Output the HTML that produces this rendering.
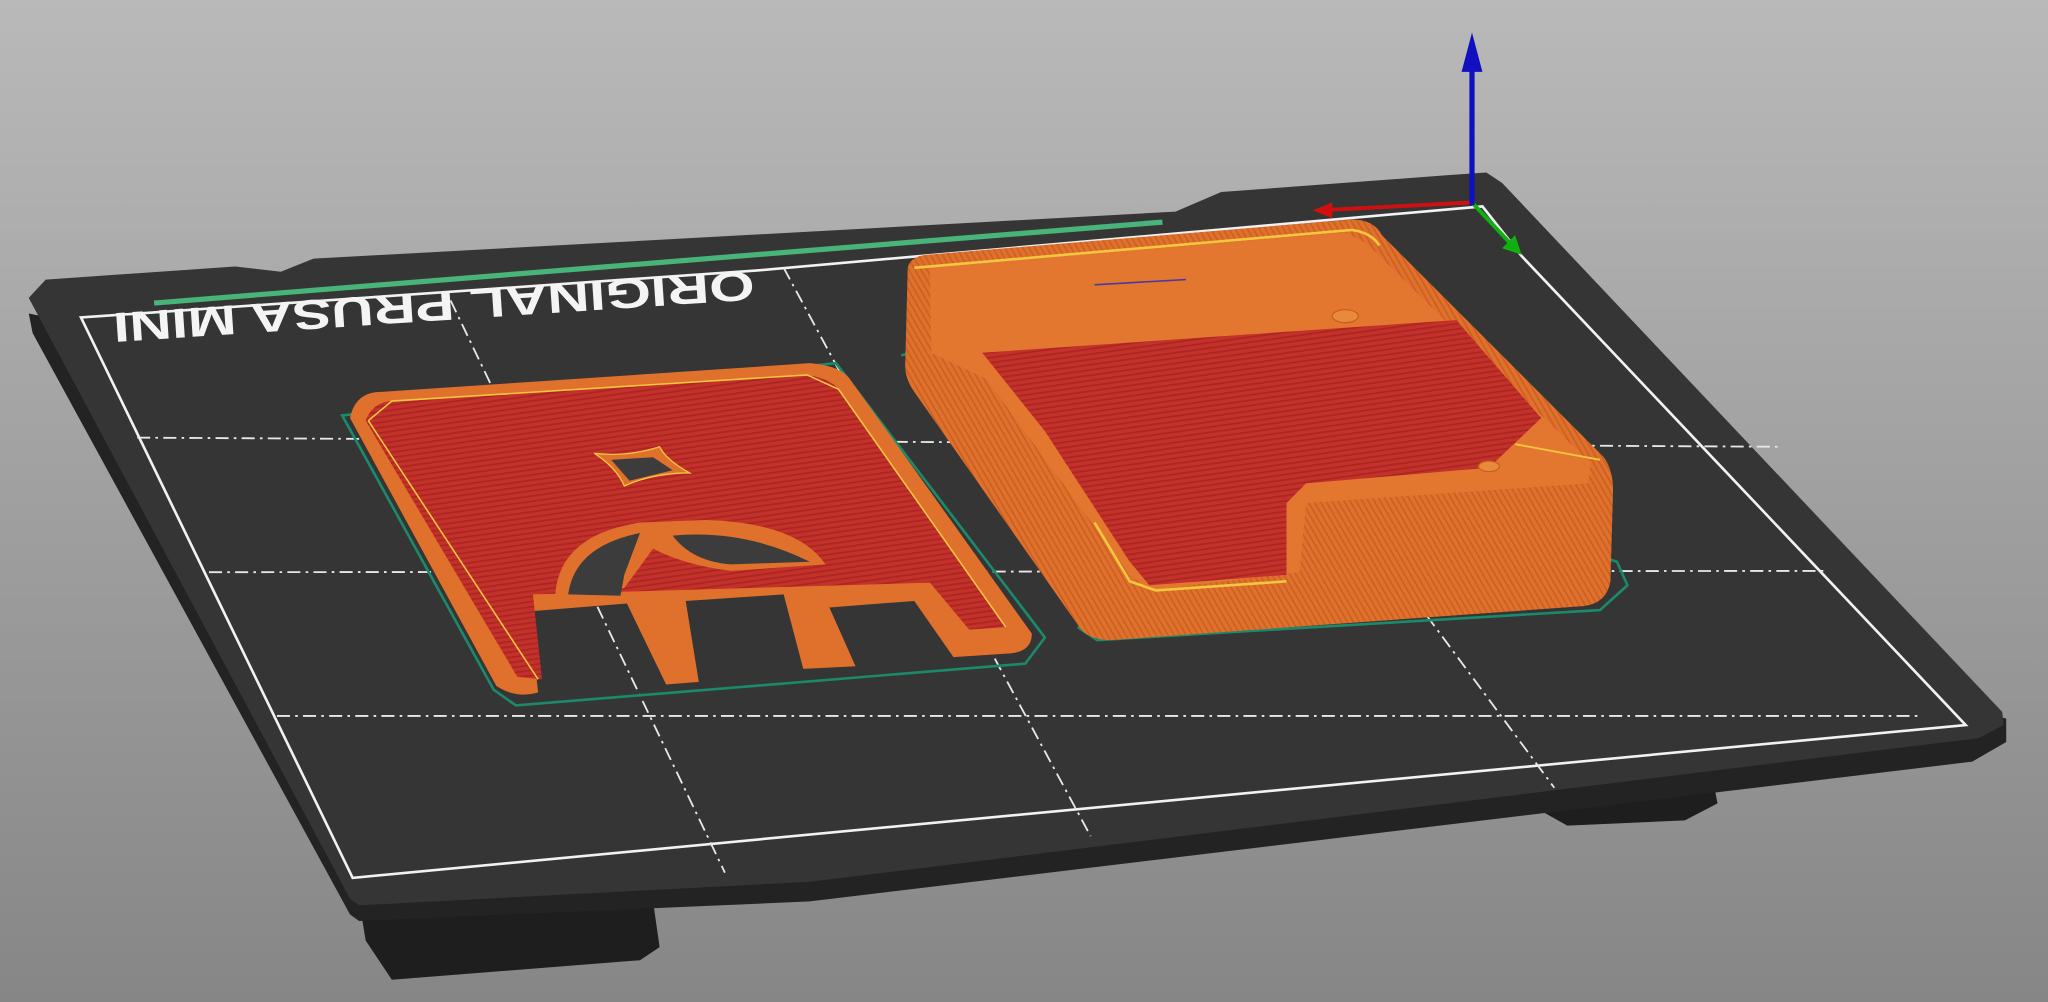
<!DOCTYPE html>
<html><head><meta charset="utf-8"><style>
html,body{margin:0;padding:0;width:2048px;height:1002px;overflow:hidden;background:#a0a0a0}
svg{display:block}
</style></head><body>
<svg width="2048" height="1002" viewBox="0 0 1568 767" preserveAspectRatio="none" xmlns="http://www.w3.org/2000/svg">
<defs>
<linearGradient id="bg" x1="0" y1="0" x2="0" y2="1">
<stop offset="0" stop-color="#b9b9b9"/><stop offset="1" stop-color="#868686"/>
</linearGradient>
<pattern id="rt" width="4" height="4" patternUnits="userSpaceOnUse" patternTransform="rotate(-8)">
<rect width="4" height="4" fill="#c4302a"/><rect width="4" height="1.3" fill="#a92622"/>
</pattern>
<pattern id="ot" width="4" height="4" patternUnits="userSpaceOnUse" patternTransform="rotate(60)">
<rect width="4" height="4" fill="#e0712c"/><rect width="4" height="1.2" fill="#c95f22"/>
</pattern>
</defs>
<rect width="1568" height="767" fill="url(#bg)"/>
<polygon points="275,690 500,690 505,725 490,735 300,750 280,720" fill="#1e1e1e"/>
<polygon points="1170,600 1310,590 1315,615 1290,628 1200,632 1175,618" fill="#1e1e1e"/>
<polygon points="22,240 25,255 268,700 275,705 620,690 1510,583 1536,568 1536,550" fill="#232323"/>
<polygon points="22,228 35,214 180,204 215,208 240,198 900,162 935,147 1110,134 1138,132 1150,140 1533,545 1534,555 1515,565 620,675 275,693 268,688" fill="#353535"/>
<polygon points="62,243 580,207 1135,158 1165,196 1505,555 270,672" fill="none" stroke="#f2f2f2" stroke-width="2"/>
<g stroke="#e8e8e8" stroke-width="1.4" stroke-dasharray="10,4,2,4" fill="none">
<line x1="345" y1="230" x2="555" y2="668"/>
<line x1="600" y1="205" x2="835" y2="640"/>
<line x1="878" y1="182" x2="1190" y2="603"/>
<line x1="105" y1="335" x2="1365" y2="342"/>
<line x1="160" y1="438" x2="1398" y2="437"/>
<line x1="212" y1="548" x2="1470" y2="548"/>
</g>
<line x1="118" y1="232" x2="890" y2="170" stroke="#48b47a" stroke-width="4"/>
<text x="0" y="0" transform="translate(332,232) rotate(176.2)" text-anchor="middle" dominant-baseline="middle" font-family="Liberation Sans, sans-serif" font-weight="bold" font-size="32" textLength="492" lengthAdjust="spacingAndGlyphs" fill="#f4f4f4">ORIGINAL PRUSA MINI</text>
<path d="M262,318 L640,278 L800,488 L785,508 L395,540 L378,528 Z" fill="none" stroke="#1a8a6a" stroke-width="2"/>
<path d="M690,272 L705,268 L1238,430 L1246,448 L1225,467 L840,490 L825,480" fill="none" stroke="#1a8a6a" stroke-width="2"/>
<path d="M268,320 Q272,300 292,300 L620,278 Q645,280 652,292 L790,485 Q790,498 775,500 L730,503 L700,460 L635,465 L655,510 L615,512 L600,455 L525,460 L535,522 L510,524 L480,462 L405,468 L412,530 Q395,535 380,525 Z" fill="#e0712c"/>
<path d="M280,322 Q285,308 300,307 L618,287 Q636,290 642,298 L770,480 L742,482 L712,446 L408,455 L415,520 L396,518 Z" fill="url(#rt)"/>
<path d="M282,322 L300,307 L618,287 L642,298 L770,480 M412,520 L282,322" fill="none" stroke="#f3c640" stroke-width="1.2"/>
<path d="M455,347 Q480,350 505,342 Q510,352 528,362 Q500,362 478,372 Q472,358 455,347 Z" fill="#e0712c" stroke="#f3c640" stroke-width="1"/>
<path d="M468,352 L500,350 L515,360 L482,368 Z" fill="#3c3c3c"/>
<path d="M425,460 Q425,410 490,400 L540,398 Q610,400 632,432 L560,437 Q525,433 500,420 L478,450 L440,462 Z" fill="#e0712c"/>
<path d="M435,455 Q440,418 490,408 L478,440 L475,456 Z" fill="#3c3c3c"/>
<path d="M515,410 Q570,405 620,430 L560,432 Q530,430 515,410 Z" fill="#3c3c3c"/>
<path d="M695,205 Q697,196 710,195 L1035,168 Q1052,168 1058,180 L1228,350 Q1235,360 1235,375 L1233,445 Q1230,462 1212,464 L850,490 Q832,490 825,478 L700,300 Q693,290 693,280 Z" fill="url(#ot)"/>
<path d="M712,205 L1030,178 L1046,186 L1218,355 L1216,370 L1000,385 L995,438 L880,452 L865,440 L755,290 L713,270 Z" fill="#e4772f"/>
<path d="M752,270 L1115,245 L1180,320 L1140,358 L1000,370 L985,385 L985,440 L880,448 L865,430 L800,330 Z" fill="url(#rt)"/>
<path d="M700,205 L1035,176 Q1050,178 1056,188" fill="none" stroke="#f3c640" stroke-width="2"/>
<path d="M838,400 L865,445 L885,452 L985,445" fill="none" stroke="#f3c640" stroke-width="2"/>
<path d="M1160,340 L1225,352" fill="none" stroke="#f3c640" stroke-width="1.5"/>
<line x1="838" y1="218" x2="908" y2="214" stroke="#4a3aa0" stroke-width="1.2"/>
<ellipse cx="1030" cy="242" rx="10" ry="5" fill="#e98a3a" stroke="#c95f22"/>
<ellipse cx="1140" cy="357" rx="8" ry="4" fill="#e98a3a" stroke="#c95f22"/>
<line x1="1127" y1="155" x2="1010" y2="161" stroke="#d01010" stroke-width="3"/>
<polygon points="1005,161 1020,155 1020,167" fill="#d01010"/>
<line x1="1127" y1="155" x2="1158" y2="188" stroke="#10b010" stroke-width="3"/>
<polygon points="1165,195 1150,190 1160,180" fill="#10b010"/>
<line x1="1127" y1="157" x2="1127" y2="50" stroke="#1010c0" stroke-width="4"/>
<polygon points="1127,25 1119,55 1135,55" fill="#1010c0"/>
</svg>
</body></html>
